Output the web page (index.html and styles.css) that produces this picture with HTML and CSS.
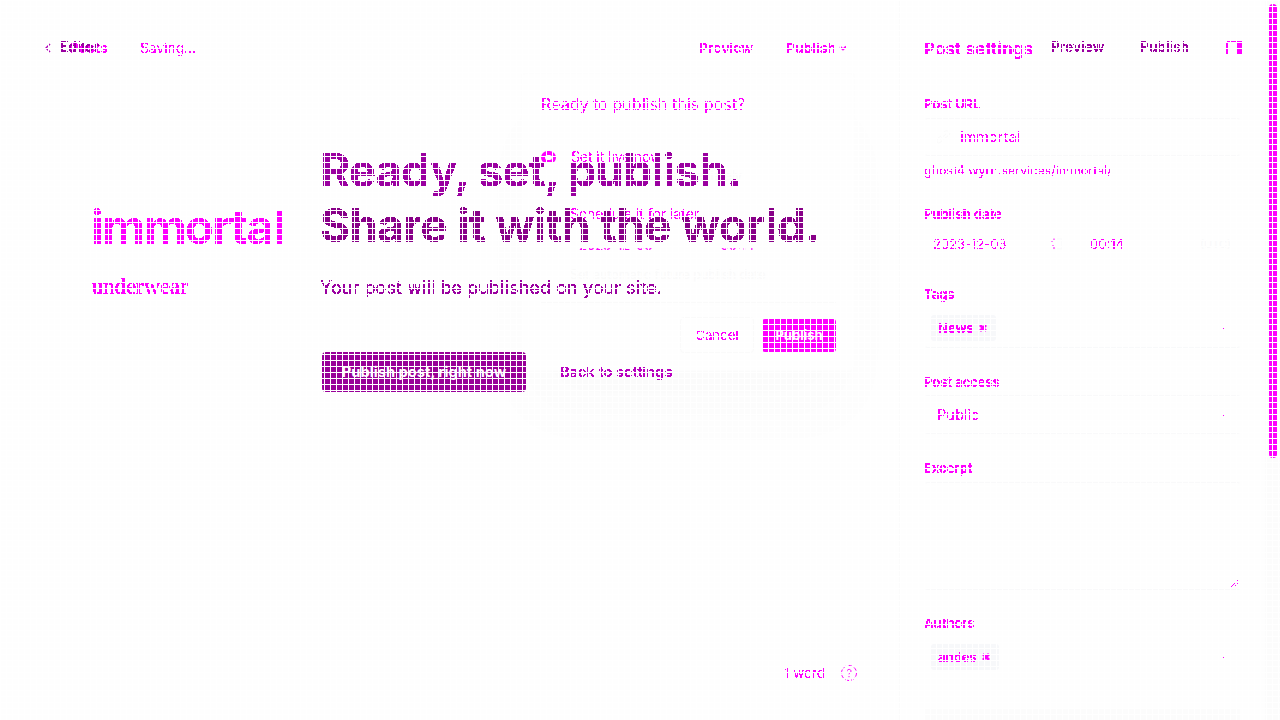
FILE: index.html
```
<!DOCTYPE html>
<html lang="en">
<head>
<meta charset="utf-8">
<title>Editor</title>
<link rel="stylesheet" href="styles.css">
</head>
<body>
<svg class="defs" width="0" height="0"><filter id="crisp" x="-5%" y="-20%" width="110%" height="140%" color-interpolation-filters="sRGB"><feComponentTransfer><feFuncA type="discrete" tableValues="0 0 1 1 1"/></feComponentTransfer></filter></svg>
<div class="app">
  <div class="screen">
    <main class="editor">
      <header class="editor-bar">
        <span class="back ink">Posts</span>
        <span class="saving ink">Saving...</span>
        <span class="preview ink">Preview</span>
        <span class="publish ink">Publish</span>
        <svg class="caret" width="8" height="6" viewBox="0 0 8 6"><path d="M1 1.5 4 4.5 7 1.5"/></svg>
      </header>
      <h1 class="title ink">immortal</h1>
      <p class="body-copy ink">underwear</p>
      <footer class="count"><span class="ink">1 word</span>
        <svg width="18" height="18" viewBox="0 0 18 18"><circle cx="9" cy="9" r="7.5" stroke-dasharray="3.8 2"/><path d="M7 7.3C7 4.8 11 4.8 11 7.2 11 8.8 9 8.5 9 10.3M9 12v1.2"/></svg>
      </footer>
    </main>
    <aside class="settings">
      <h2 class="settings-title ink">Post settings</h2>
      <label class="label ink">Post URL</label>
      <div class="box url"><svg class="link" width="16" height="14" viewBox="0 0 16 14"><path d="M7 4 10 1Q12 0 14 2T13 6L10 8M8 9 6 12Q3 14 2 12T3 8L6 6M5 9 11 4"/></svg><span class="ink">immortal</span></div>
      <div class="hint ink">ghost4.wyrn.services/immortal/</div>
      <label class="label l-date ink">Publish date</label>
      <div class="dates"><div class="box date"><span class="ink">2023-12-03</span><svg width="14" height="14" viewBox="0 0 14 14"><path class="pale" d="M7 2h5v10H3"/><path class="bits" d="M1 4h2M4 1.500v2M2 9h2M4 10v2M6 11.500h1"/></svg></div><div class="box time"><span class="ink">00:14</span><span class="zone">(UTC)</span></div></div>
      <label class="label l-tags ink">Tags</label>
      <div class="box select tags"><span class="chip"><span class="ink">News</span><svg width="8" height="8" viewBox="0 0 8 8"><path d="M1 1 7 7M7 1 1 7"/></svg></span><i class="dot"></i></div>
      <label class="label l-access ink">Post access</label>
      <div class="box select access"><span class="ink">Public</span><i class="dot"></i></div>
      <label class="label l-excerpt ink">Excerpt</label>
      <div class="box excerpt"><svg width="9" height="8" viewBox="0 0 9 8"><path d="M1 7 8 0M5 6 8 3"/></svg></div>
      <label class="label l-authors ink">Authors</label>
      <div class="box select authors"><span class="chip chip-author"><span class="ink">andes</span><svg width="8" height="8" viewBox="0 0 8 8"><path d="M1 1 7 7M7 1 1 7"/></svg></span><i class="dot"></i></div>
      <div class="block"></div>
    </aside>
    <div class="track"><div class="thumb"></div></div>
  </div>

  <section class="popup">
    <h3 class="ask ink">Ready to publish this post?</h3>
    <div class="option live"><span class="radio"></span><span class="ink">Set it live now</span></div>
    <p class="faint note-live">Publish this post immediately</p>
    <div class="option later"><span class="ink">Schedule it for later</span></div>
    <div class="schedule"><span>2023-12-03</span><span>00:14</span></div>
    <p class="faint note-later">Set automatic future publish date</p>
    <div class="actions"><button class="cancel"><span class="ink">Cancel</span></button><button class="confirm">Publish</button></div>
  </section>

  <section class="flow">
    <header class="flow-bar">
      <svg class="chev" width="6" height="10" viewBox="0 0 6 10"><path d="M5 1 1 5 5 9"/></svg>
      <span class="flow-back ink">Editor</span>
      <span class="flow-preview ink">Preview</span>
      <span class="flow-publish ink">Publish</span>
      <svg class="panel" width="16" height="13" viewBox="0 0 16 13"><path d="M1 0h15v1H1zM0 2h2v11H0zM11 2h5v11h-5z"/></svg>
    </header>
    <div class="flow-body">
      <div class="headline"><div class="line ready ink">Ready, set, publish.</div><div class="line share ink">Share it with the world.</div></div>
      <p class="summary ink">Your post will be published on your site.</p>
      <div class="cta"><button class="now">Publish post, right now</button><span class="back-settings ink">Back to settings</span></div>
    </div>
  </section>
</div>
</body>
</html>
```
FILE: styles.css
```
* { box-sizing: border-box; }
body { margin: 0; background: #fefefe; font-family: Inter, "Liberation Sans", sans-serif; color: #f0f; overflow: hidden; }
body::after {
  content: ""; position: fixed; inset: 0; pointer-events: none;
  background: repeating-linear-gradient(90deg, #fff 0 1px, transparent 1px 6px), repeating-linear-gradient(#fff 0 1px, transparent 1px 6px);
}
.defs { position: absolute; }
.ink { filter: url(#crisp); }
h1, h2, h3, p { margin: 0; }
button { border: 0; padding: 0; font-family: inherit; }
span, .line, label { white-space: nowrap; }
svg path, svg circle { fill: none; stroke: #f0f; }
.app { position: relative; width: 1280px; height: 720px; overflow: hidden; }
.screen { display: flex; height: 720px; }

.editor { width: 899px; display: flex; flex-direction: column; }
.editor-bar { display: flex; align-items: center; height: 96px; padding: 0 52px 0 70px; font-size: 13.8px; line-height: 20px; font-weight: 700; }
.back { width: 70px; }
.saving { font-weight: 400; flex: 1; }
.preview { width: 87px; }
.publish { margin-right: 3px; }
.caret path { stroke-width: 1.8; }
.title { margin: 101px 0 0 91px; font-size: 47px; line-height: 60px; font-weight: 700; letter-spacing: -1.5px; }
.body-copy { margin: 16px 0 0 92px; font: 22.7px/28px "Liberation Serif", serif; -webkit-text-stroke: .3px #f0f; }
.count { margin-top: auto; padding: 0 41px 38px; display: flex; justify-content: flex-end; align-items: center; gap: 15px; font-size: 13.4px; }

.settings { width: 366px; height: 720px; overflow: hidden; border-left: 1px solid #fbfbfb; padding: 39px 24px 0; display: flex; flex-direction: column; }
.settings > * { flex-shrink: 0; }
.settings-title { font-size: 16.9px; line-height: 20px; font-weight: 700; margin-bottom: 35px; letter-spacing: .15px; }
.label { font-size: 12.9px; line-height: 22px; height: 20px; font-weight: 700; display: block; }
.box { border: 1px solid #f9f9fa; border-left-color: #fefefe; border-right-color: #fefefe; border-radius: 4px; display: flex; align-items: center; font-size: 14.6px; width: 317px; }
.url { margin-top: 4px; height: 38px; padding: 0 0 0 10px; }
.link { margin-right: 9px; }
.link path { stroke: #fafafa; }
.hint { margin-top: 6px; height: 18px; line-height: 18px; font-size: 12.5px; }
.l-date { margin-top: 24px; }
.dates { display: flex; gap: 8px; margin-top: 5px; }
.dates .box { height: 31px; font-size: 13px; border-color: #fefefe; padding-bottom: 1px; }
.date { width: 149px; padding: 0 8px 0 8px; justify-content: space-between; }
.date .pale { stroke: #f9f9fa; }
.time { width: 160px; padding: 0 9px 0 8px; justify-content: space-between; }
.zone { font-size: 11px; color: #f9f9fa; }
.l-tags { margin-top: 24px; }
.select { height: 39px; padding: 0 15px 0 6px; justify-content: space-between; }
.tags { margin-top: 5px; border-color: #fefefe #fefefe #f8f9fa; padding-bottom: 2px; }
.chip { display: flex; align-items: center; gap: 5px; height: 26px; width: 65px; padding-left: 7px; border-radius: 3px; background: #f7f8fa; font-size: 13px; font-weight: 700; }
.chip path { stroke-width: 2.8; }
.dot { width: 2px; height: 1px; background: #f0f; margin-top: 2px; }
.l-access { margin-top: 24px; }
.access { margin-top: 3px; padding-left: 12px; }
.l-excerpt { margin-top: 24px; }
.excerpt { margin-top: 4px; height: 108px; align-items: flex-end; justify-content: flex-end; padding: 0 1px 1px; }
.l-authors { margin-top: 23px; }
.authors { margin-top: 5px; border-color: #fefefe; padding-bottom: 2px; }
.chip-author { width: 68px; }
.block { height: 30px; margin-top: 31px; width: 316px; background: #fcfcfc; }
.track { width: 15px; background: #fcfcfc; padding: 4px 3px 0 4px; }
.thumb { height: 454px; border-radius: 4px; background: #f0f; }

/* Confirmation popup floating above the editor */
.popup { position: absolute; left: 521px; top: 73px; width: 334px; height: 298px; padding: 19px 18px 20px 19px; background: #fefefe; border: 1px solid #fdfdfd; border-radius: 4px; box-shadow: 0 45px 70px rgba(0,0,0,.016); }
.ask { font-size: 16.1px; font-weight: 400; line-height: 22px; }
.option { display: flex; align-items: center; font-size: 13.8px; height: 20px; }
.live { margin-top: 32px; clip-path: inset(0 0 4px 0); }
.radio { width: 15px; height: 13px; border: 4px solid #f0f; border-radius: 7px; margin-right: 15px; }
.faint { color: #fafafa; font-size: 12.5px; line-height: 18px; margin-left: 29px; }
.later { margin: 18px 0 0 29px; clip-path: inset(0 0 4px 0); font-size: 14px; }
.schedule { display: flex; gap: 68px; padding-left: 38px; margin-top: 14px; font-size: 13px; line-height: 16px; clip-path: inset(11px 0 0 0); }
.note-later { margin-top: 13px; }
.actions { display: flex; justify-content: flex-end; align-items: center; gap: 8px; margin-top: 18px; padding-top: 14px; border-top: 1px solid #fafafa; }
.cancel { width: 74px; height: 36px; border: 1px solid #fafafa; border-radius: 4px; background: #fefefe; color: #f0f; font-size: 13.3px; }
.confirm { width: 74px; height: 33px; border-radius: 3px; background: #f0f; color: #fff; font-size: 13px; font-weight: 700; }

/* Publish flow drawn above both the editor and its popup */
.flow { position: absolute; inset: 0; color: #9a00a0; }
.flow-bar { display: flex; align-items: center; height: 95px; padding-left: 45px; font-size: 13.8px; font-weight: 600; }
.flow-bar .ink { margin-top: -1px; }
.chev { margin-right: 9px; }
.chev path { stroke: #b000b8; stroke-width: 1.5; }
.flow-back { width: 991px; }
.flow-preview { width: 89px; }
.flow-publish { width: 86px; }
.panel path { fill: #f0f; stroke: none; }
.flow-body { padding: 48px 0 0 320px; }
.line { font-size: 46px; line-height: 55px; font-weight: 700; letter-spacing: -.7px; }
.ready { letter-spacing: -.98px; }
.share { color: #880088; }
.summary { font-size: 18px; line-height: 26px; margin-top: 22px; letter-spacing: .08px; -webkit-text-stroke: .15px #9a00a0; }
.cta { display: flex; align-items: center; margin: 51px 0 0 2px; }
.now { width: 204px; height: 40px; border-radius: 4px; background: #980098; color: #fff; font-size: 14.7px; font-weight: 700; margin-right: 34px; }
.back-settings { font-size: 14.6px; font-weight: 600; color: #b800c0; }
```
